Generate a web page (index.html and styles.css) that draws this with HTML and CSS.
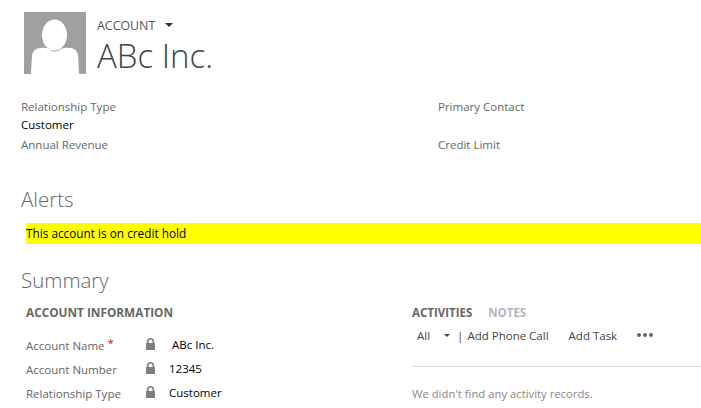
FILE: index.html
```html
<!DOCTYPE html>
<html lang="en">
<head>
    <meta charset="UTF-8">
    <title>Account</title>
    <link rel="stylesheet" href="styles.css">
</head>
<body>

<div class="header">
    <svg class="avatar" width="62" height="62" viewBox="0 0 62 62">
        <rect width="62" height="62" fill="#a0a19f"/>
        <ellipse cx="30.5" cy="23" rx="12.5" ry="15.500" fill="#fff"/>
        <path d="M7 62 L8 43 Q9 37 16 36 Q22 35 25 37 Q31 42 37 37 Q41 35 47 36 Q53 37 54 43 L55 62 Z" fill="#fff"/>
    </svg>
    <div class="title-block">
        <div class="entity">ACCOUNT <span class="caret"></span></div>
        <div class="name">ABc Inc.</div>
    </div>
</div>

<div class="top-fields">
    <div class="top-col">
        <div class="label">Relationship Type</div>
        <div class="value">Customer</div>
        <div class="label revenue">Annual Revenue</div>
    </div>
    <div class="top-col-right">
        <div class="label">Primary Contact</div>
        <div class="label limit">Credit Limit</div>
    </div>
</div>

<h2 class="section alerts">Alerts</h2>
<div class="alert-bar">This account is on credit hold</div>

<h2 class="section summary">Summary</h2>

<div class="columns">
    <div class="info">
        <div class="sub-head">ACCOUNT INFORMATION</div>
        <div class="form-row first">
            <div class="form-label">Account Name<span class="req">*</span></div>
            <svg class="lock" width="9" height="12" viewBox="0 0 10 12" preserveAspectRatio="none"><path d="M0 12V5H1V3.5Q1 0 5 0Q9 0 9 3.5V5H10V12ZM2.800 5H7.200V3.500Q7.200 1.600 5 1.600Q2.800 1.600 2.800 3.500Z" fill="#7f7f7f"/></svg>
            <div class="form-value indent">ABc Inc.</div>
        </div>
        <div class="form-row">
            <div class="form-label">Account Number</div>
            <svg class="lock" width="9" height="12" viewBox="0 0 10 12" preserveAspectRatio="none"><path d="M0 12V5H1V3.5Q1 0 5 0Q9 0 9 3.5V5H10V12ZM2.800 5H7.200V3.500Q7.200 1.600 5 1.600Q2.800 1.600 2.800 3.500Z" fill="#7f7f7f"/></svg>
            <div class="form-value">12345</div>
        </div>
        <div class="form-row">
            <div class="form-label">Relationship Type</div>
            <svg class="lock" width="9" height="12" viewBox="0 0 10 12" preserveAspectRatio="none"><path d="M0 12V5H1V3.5Q1 0 5 0Q9 0 9 3.5V5H10V12ZM2.800 5H7.200V3.500Q7.200 1.600 5 1.600Q2.800 1.600 2.800 3.500Z" fill="#7f7f7f"/></svg>
            <div class="form-value">Customer</div>
        </div>
    </div>
    <div class="activity">
        <div class="tabs">
            <span class="tab-on">ACTIVITIES</span>
            <span class="tab-off">NOTES</span>
        </div>
        <div class="toolbar">
            <span class="filter">All</span>
            <span class="mini-caret"></span>
            <span class="sep">|</span>
            <span class="action">Add Phone Call</span>
            <span class="action task">Add Task</span>
            <span class="dots"><i></i><i></i><i></i></span>
        </div>
        <div class="empty">We didn't find any activity records.</div>
    </div>
</div>

</body>
</html>
```

FILE: styles.css
```css
html, body {
    margin: 0;
    padding: 0;
}

body {
    width: 701px;
    height: 408px;
    overflow: hidden;
    background: #fff;
    font-family: "Open Sans", "Noto Sans", sans-serif;
    font-size: 11.5px;
    color: #666;
}

.header {
    display: flex;
    padding: 12px 0 0 24px;
}

.avatar {
    display: block;
}

.title-block {
    margin-left: 11px;
}

.entity {
    margin-top: 5px;
    height: 18px;
    line-height: 17px;
    font-size: 12.4px;
    color: #555;
}

.caret {
    display: inline-block;
    margin: 0 0 3px 6px;
    border-left: 4px solid transparent;
    border-right: 4px solid transparent;
    border-top: 4px solid #333;
}

.name {
    height: 44px;
    line-height: 42px;
    font-size: 33px;
    font-weight: 300;
    color: #444;
}

.top-fields {
    display: flex;
    padding: 20px 0 0 21px;
}

.top-col {
    flex: none;
    width: 417px;
}

.top-col-right {
    flex: 1;
}

.label {
    height: 16px;
    line-height: 16px;
    color: #666;
}

.value {
    height: 19px;
    line-height: 19px;
    color: #000;
}

.revenue {
    margin-top: 3px;
}

.limit {
    margin-top: 22px;
}

.section {
    margin: 0;
    padding-left: 21px;
    font-size: 20.5px;
    font-weight: 300;
    color: #666;
    height: 28px;
    line-height: 28px;
}

.alerts {
    margin-top: 32px;
}

.alert-bar {
    margin: 10px 0 0 26px;
    height: 21px;
    line-height: 21px;
    background: #ff0;
    color: #000;
    font-size: 11.8px;
}

.summary {
    margin-top: 22px;
}

.columns {
    display: flex;
    margin-top: 10px;
}

.info {
    width: 386px;
    padding-left: 26px;
}

.sub-head {
    height: 17px;
    line-height: 17px;
    font-size: 11.8px;
    font-weight: 700;
    color: #666;
}

.form-row {
    display: flex;
    align-items: center;
    height: 24px;
}

.form-row.first {
    margin-top: 12px;
}

.form-label {
    width: 120px;
    color: #666;
}

.req {
    color: #e00;
    margin-left: 3px;
    position: relative;
    top: -3px;
}

.lock {
    display: block;
    margin-bottom: 3px;
}

.form-value {
    margin-left: 14px;
    margin-bottom: 2px;
    color: #000;
}

.form-value.indent {
    margin-left: 17px;
}

.activity {
    width: 289px;
}

.tabs {
    height: 17px;
    line-height: 17px;
    font-weight: 700;
}

.tab-on {
    color: #666;
}

.tab-off {
    color: #b5b5b5;
    margin-left: 13px;
}

.toolbar {
    display: flex;
    align-items: center;
    height: 20px;
    margin-top: 4px;
    padding-left: 5px;
    padding-bottom: 21px;
    border-bottom: 1px solid #d9d9d9;
    color: #444;
}

.mini-caret {
    margin-left: 14px;
    border-left: 3px solid transparent;
    border-right: 3px solid transparent;
    border-top: 3px solid #444;
}

.sep {
    margin-left: 7px;
}

.action {
    margin-left: 4px;
}

.action.task {
    margin-left: 20px;
}

.dots {
    display: flex;
    gap: 2px;
    margin-left: 20px;
}

.dots i {
    width: 4px;
    height: 4px;
    border-radius: 50%;
    background: #666;
}

.empty {
    margin-top: 19px;
    font-size: 11.3px;
    color: #888;
}
```
